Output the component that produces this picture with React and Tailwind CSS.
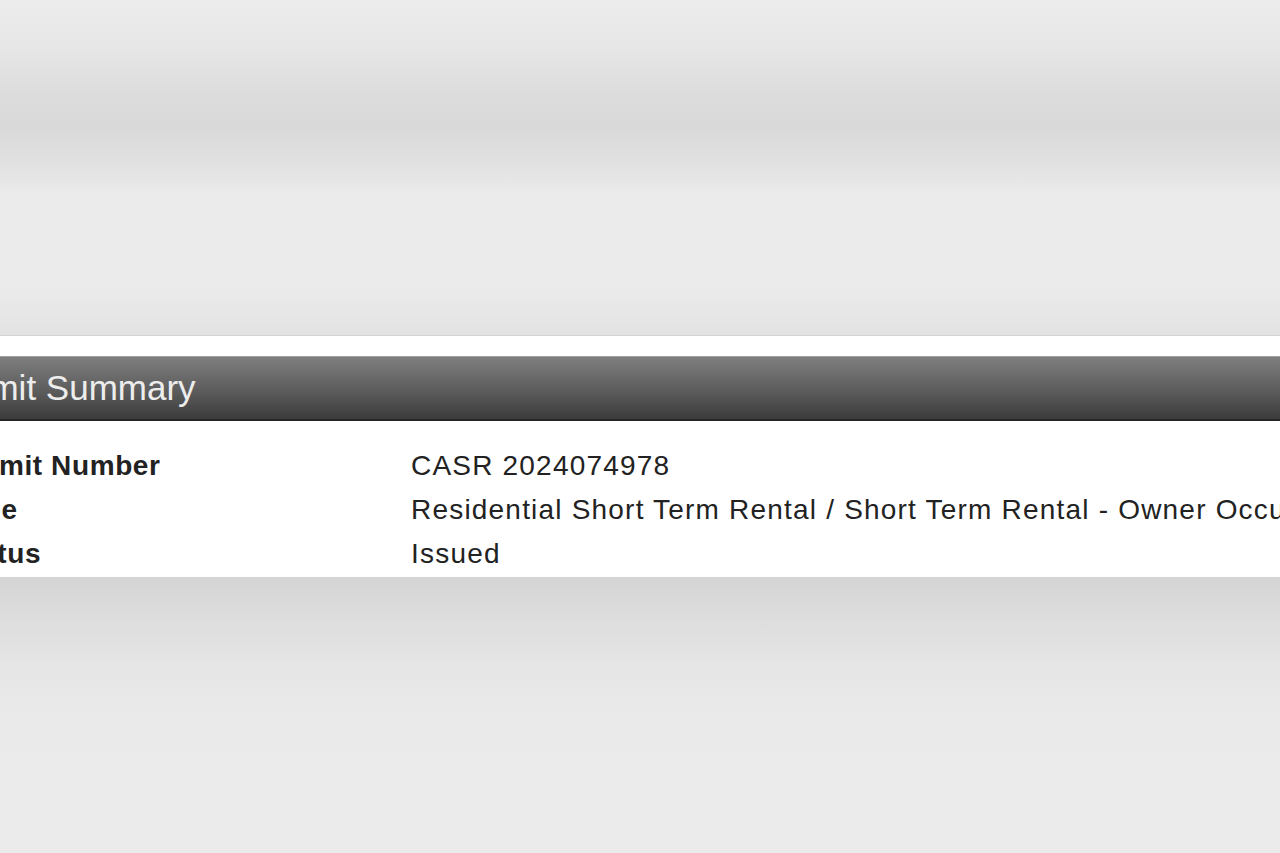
export default function App() {
  const rows = [
    ["Permit Number", "CASR 2024074978"],
    ["Type", "Residential Short Term Rental / Short Term Rental - Owner Occupied"],
    ["Status", "Issued"],
  ];

  return (
    <div className="flex h-[853px] w-[1280px] flex-col overflow-hidden bg-[#ebebeb] font-['Liberation_Sans',Arial,sans-serif]">
      {/* soft backdrop above the card */}
      <div className="h-[335px] shrink-0 bg-[linear-gradient(to_bottom,#ececec_0px,#e7e7e7_45px,#dcdcdc_95px,#d9d9d9_125px,#e1e1e1_165px,#ebebeb_195px,#ebebeb_285px,#e3e3e3_335px)]" />

      <section className="shrink-0 border-t border-b border-[#d3d3d3] bg-white pt-[20px] pb-[1px]">
        <div className="flex h-[65px] items-center border-t border-b-2 border-t-[#a0a0a0] border-b-[#262626] bg-[linear-gradient(to_bottom,#7e7e7e,#5c5c5c_55%,#3b3b3b)]">
          <h2 className="ml-[-65px] whitespace-nowrap text-[35px] font-normal text-[#ededed]">
            Permit Summary
          </h2>
        </div>
        <div className="ml-[-48px] pt-[23px]">
          {rows.map(([label, value]) => (
            <div key={label} className="flex h-[44px] items-center whitespace-nowrap text-[28px] leading-[44px] text-[#222]">
              <span className="w-[459px] shrink-0 font-bold tracking-[0.6px]">{label}</span>
              <span className="tracking-[1.2px]">{value}</span>
            </div>
          ))}
        </div>
      </section>

      {/* soft backdrop below the card */}
      <div className="flex-1 bg-[linear-gradient(to_bottom,#d5d5d5_0px,#dcdcdc_35px,#e4e4e4_80px,#e9e9e9_120px,#ebebeb_200px)]" />
    </div>
  );
}
